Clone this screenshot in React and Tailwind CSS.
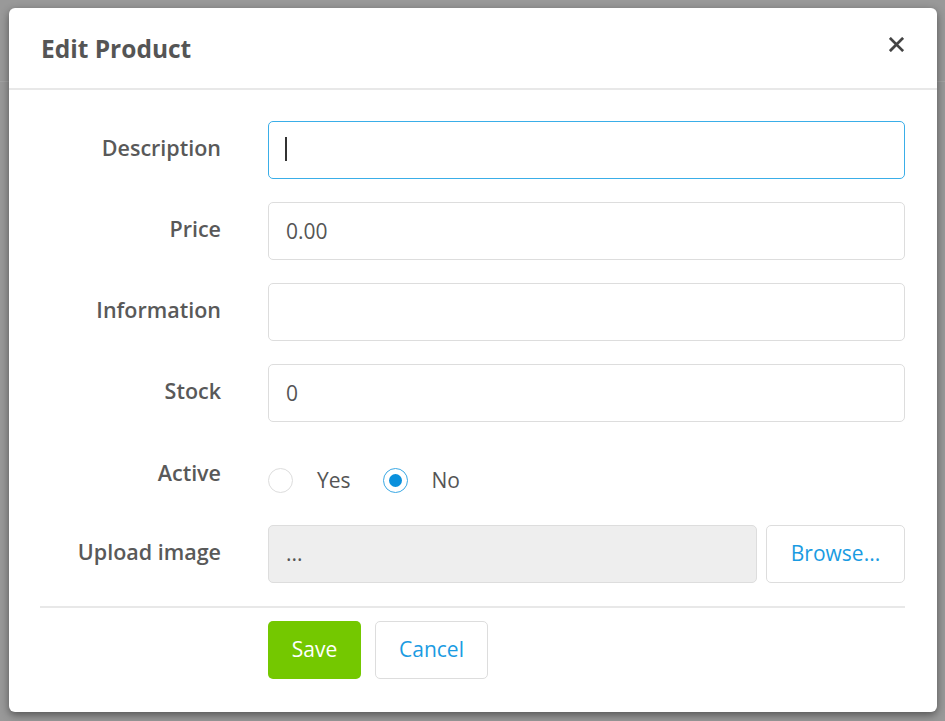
import { useState } from 'react'

const fields = [
  { label: 'Description', value: '', focused: true },
  { label: 'Price', value: '0.00' },
  { label: 'Information', value: '' },
  { label: 'Stock', value: '0' },
]

function FieldRow({ label, children, className = '' }) {
  return (
    <div className={`flex items-center ${className}`}>
      <label className="w-[181px] shrink-0 pb-[3px] text-right text-[21.5px] font-semibold text-[#595959]">{label}</label>
      <div className="ml-[47px] flex-1">{children}</div>
    </div>
  )
}

function Radio({ checked, label, onClick }) {
  return (
    <button type="button" onClick={onClick} className="flex items-center">
      <span
        className={`flex h-[25px] w-[25px] items-center justify-center rounded-full border bg-white ${
          checked ? 'border-[#3aa8e4]' : 'border-[#dddddd]'
        }`}
      >
        {checked ? <span className="h-[13px] w-[13px] rounded-full bg-[#0a90dc]" /> : null}
      </span>
      <span className="ml-[24px] text-[21px] text-[#555555]">{label}</span>
    </button>
  )
}

export default function App() {
  const [values, setValues] = useState(fields.map((field) => field.value))
  const [active, setActive] = useState(false)

  return (
    <div className="relative min-h-[721px] bg-[#999999] pl-[9px] pt-[8px] font-['Open_Sans',sans-serif]">
      <div className="absolute inset-x-0 top-0 h-[82px] border-b border-[#a3a3a3]" />
      <div className="relative w-[928px] rounded-[6px] bg-white shadow-[0_3px_9px_rgba(0,0,0,0.45)]">
        <div className="flex h-[82px] items-center justify-between border-b-2 border-[#e8e8e8] pl-[32px] pr-[33px]">
          <h4 className="mt-[2px] text-[24.5px] font-bold text-[#555555]">Edit Product</h4>
          <button type="button" className="mb-[7px] text-[#444444]">
            <svg width="15" height="15" viewBox="0 0 16 16">
              <path d="M2 2L14 14M14 2L2 14" stroke="currentColor" strokeWidth="3" strokeLinecap="square" />
            </svg>
          </button>
        </div>

        <div className="px-[31px] pb-[33px] pt-[31px] pr-[32px]">
          <div className="flex flex-col gap-[23px]">
            {fields.map((field, index) => (
              <FieldRow key={field.label} label={field.label}>
                <div className="relative">
                  <input
                    value={values[index]}
                    onChange={(event) => {
                      const next = [...values]
                      next[index] = event.target.value
                      setValues(next)
                    }}
                    className={`h-[58px] w-full rounded-[5px] border bg-white px-[17px] text-[21px] text-[#555555] outline-none ${
                      field.focused ? 'border-[#3aaee8]' : 'border-[#dddddd]'
                    }`}
                  />
                  {field.focused && !values[index] ? (
                    <span className="pointer-events-none absolute left-[17px] top-[16px] h-[24px] w-[2px] bg-[#333333]" />
                  ) : null}
                </div>
              </FieldRow>
            ))}
          </div>

          <FieldRow label="Active" className="mt-[15px] h-[75px]">
            <div className="flex items-center gap-[32px] pt-[12px]">
              <Radio checked={active} label="Yes" onClick={() => setActive(true)} />
              <Radio checked={!active} label="No" onClick={() => setActive(false)} />
            </div>
          </FieldRow>

          <FieldRow label="Upload image" className="mt-[13px]">
            <div className="flex gap-[9px]">
              <div className="flex h-[58px] flex-1 items-center rounded-[5px] border border-[#dddddd] bg-[#eeeeee] px-[17px] text-[21px] text-[#555555]">
                ...
              </div>
              <button
                type="button"
                className="h-[58px] w-[139px] rounded-[5px] border border-[#dddddd] bg-white text-[21px] text-[#1a9be2]"
              >
                Browse...
              </button>
            </div>
          </FieldRow>

          <div className="mt-[23px] border-t-2 border-[#e8e8e8] pt-[13px]">
            <div className="ml-[228px] flex gap-[14px]">
              <button type="button" className="h-[58px] w-[93px] rounded-[5px] bg-[#74c800] text-[21px] text-white">
                Save
              </button>
              <button
                type="button"
                className="h-[58px] w-[113px] rounded-[5px] border border-[#dddddd] bg-white text-[21px] text-[#1a9be2]"
              >
                Cancel
              </button>
            </div>
          </div>
        </div>
      </div>
    </div>
  )
}
